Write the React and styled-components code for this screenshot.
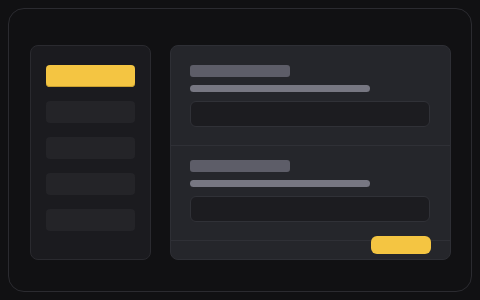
import { createGlobalStyle, styled } from 'styled-components';

const Global = createGlobalStyle`
  html, body {
    margin: 0;
    padding: 0;
    background: #111113;
    font-family: "Liberation Sans", sans-serif;
  }
`

const Page = styled.div`
  width: 480px;
  height: 300px;
  box-sizing: border-box;
  padding: 8px;
`

const Frame = styled.div`
  height: 100%;
  box-sizing: border-box;
  border: 1px solid #2b2b30;
  border-radius: 16px;
  padding: 36px 20px 31px 21px;
  display: flex;
  gap: 19px;
`

const Sidebar = styled.aside`
  width: 121px;
  box-sizing: border-box;
  background: #1b1b1f;
  border: 1px solid #2a2a2f;
  border-radius: 8px;
  padding: 19px 15px;
  display: flex;
  flex-direction: column;
  gap: 14px;
`

const NavItem = styled.div`
  height: 22px;
  border-radius: 4px;
  background: ${p => (p.$active ? '#f4c542' : '#242428')};
  box-shadow: ${p => (p.$active ? 'inset 0 -1px 0 #c9a030' : 'none')};
`

const Panel = styled.main`
  width: 281px;
  box-sizing: border-box;
  background: #25262b;
  border: 1px solid #2e2f35;
  border-radius: 8px;
  display: flex;
  flex-direction: column;
  overflow: hidden;
`

const Section = styled.section`
  padding: ${p => p.$pad};
  border-bottom: 1px solid #2f3036;
  display: flex;
  flex-direction: column;
`

const Label = styled.div`
  width: 100px;
  height: 12px;
  border-radius: 3px;
  background: #5d5d68;
`

const Hint = styled.div`
  width: 180px;
  height: 7px;
  margin-top: 8px;
  border-radius: 4px;
  background: #777782;
`

const Input = styled.div`
  width: 240px;
  height: 26px;
  box-sizing: border-box;
  margin-top: 9px;
  border: 1px solid #303137;
  border-radius: 6px;
  background: #1c1c20;
`

const Footer = styled.footer`
  flex: 1;
  display: flex;
  justify-content: flex-end;
  padding-right: 19px;
`

const Button = styled.button`
  width: 60px;
  height: 18px;
  margin-top: -5px;
  border: none;
  border-radius: 6px;
  background: #f4c542;
  padding: 0;
`

const App = () => {
  return (
    <>
      <Global />
      <Page>
        <Frame>
          <Sidebar>
            <NavItem $active />
            <NavItem />
            <NavItem />
            <NavItem />
            <NavItem />
          </Sidebar>
          <Panel>
            <Section $pad="19px 19px 18px">
              <Label />
              <Hint />
              <Input />
            </Section>
            <Section $pad="14px 19px 18px">
              <Label />
              <Hint />
              <Input />
            </Section>
            <Footer>
              <Button />
            </Footer>
          </Panel>
        </Frame>
      </Page>
    </>
  );
}

export default App;
